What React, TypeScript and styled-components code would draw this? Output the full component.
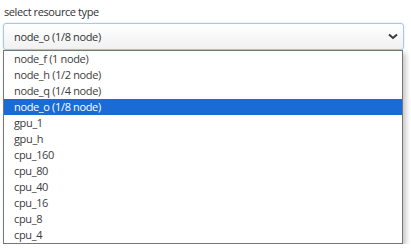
import styled, { createGlobalStyle } from "styled-components";

const GlobalStyle = createGlobalStyle`
  body {
    margin: 0;
    background: #ffffff;
    font-family: "Open Sans", "Noto Sans", Arial, sans-serif;
  }
`;

const Page = styled.div`
  padding: 2px 8px 0 3px;
  width: 400px;
`;

const Label = styled.div`
  font-size: 11px;
  letter-spacing: -0.4px;
  line-height: 16px;
  color: #333333;
  padding: 2px 0 0 1px;
  height: 19px;
`;

const SelectBox = styled.div`
  box-sizing: border-box;
  height: 27px;
  width: 401px;
  border: 1px solid #a7c7ea;
  border-radius: 3px;
  background: linear-gradient(#ffffff, #f1f1f1);
  box-shadow: 0 0 2px rgba(100, 150, 220, 0.35);
  display: flex;
  align-items: center;
  justify-content: space-between;
  padding: 0 5px 0 10px;
  font-size: 11px;
  letter-spacing: -0.35px;
  color: #333333;
`;

const ListBox = styled.div`
  box-sizing: border-box;
  width: 400px;
  border: 1px solid #767676;
  background: #ffffff;
  box-shadow: 3px 3px 5px rgba(0, 0, 0, 0.22);
`;

const Option = styled.div<{ $selected?: boolean }>`
  height: 16px;
  line-height: 16px;
  padding-left: 10px;
  font-size: 11px;
  letter-spacing: -0.35px;
  color: ${(p) => (p.$selected ? "#ffffff" : "#3c3c3c")};
  background: ${(p) => (p.$selected ? "#1a6bd6" : "transparent")};
`;

const Chevron = () => (
  <svg width="10" height="7" viewBox="0 0 10 7">
    <path d="M1 1.5 L5 5 L9 1.5" fill="none" stroke="#3a3a3a" strokeWidth="2" />
  </svg>
);

const options = [
  "node_f (1 node)",
  "node_h (1/2 node)",
  "node_q (1/4 node)",
  "node_o (1/8 node)",
  "gpu_1",
  "gpu_h",
  "cpu_160",
  "cpu_80",
  "cpu_40",
  "cpu_16",
  "cpu_8",
  "cpu_4",
];

export default function App() {
  const selected = "node_o (1/8 node)";
  return (
    <>
      <GlobalStyle />
      <Page>
        <Label>select resource type</Label>
        <SelectBox>
          <span>{selected}</span>
          <Chevron />
        </SelectBox>
        <ListBox>
          {options.map((o) => (
            <Option key={o} $selected={o === selected}>
              {o}
            </Option>
          ))}
        </ListBox>
      </Page>
    </>
  );
}
